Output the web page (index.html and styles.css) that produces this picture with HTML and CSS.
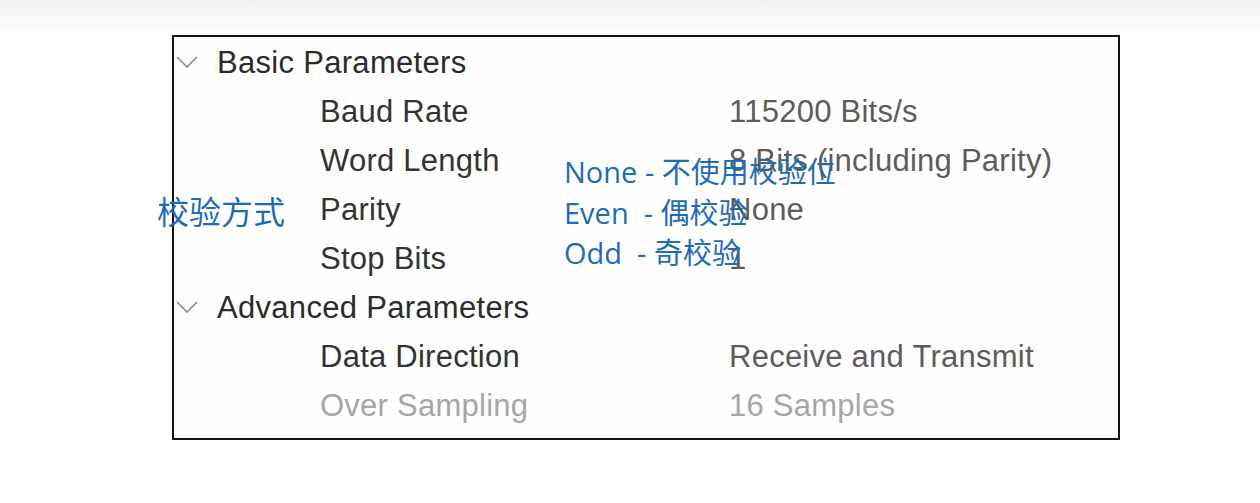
FILE: index.html
```html
<!DOCTYPE html>
<html lang="zh-CN">
<head>
   <meta charset="UTF-8">
   <meta name="viewport" content="width=device-width, initial-scale=1.0">
   <title>USART Parameter Settings</title>
   <link rel="stylesheet" href="styles.css">
</head>
<body>
   <div class="stage">
       <div class="param-box">
           <div class="group-row">
               <svg class="chevron" viewBox="0 0 22 12" width="22" height="12"><path d="M1 1 L11 11 L21 1" fill="none" stroke="#8a8a8a" stroke-width="1.6"/></svg>
               <span class="group-name">Basic Parameters</span>
           </div>
           <div class="param-row"><span class="param-name">Baud Rate</span><span class="param-value">115200 Bits/s</span></div>
           <div class="param-row"><span class="param-name">Word Length</span><span class="param-value">8 Bits (including Parity)</span></div>
           <div class="param-row"><span class="param-name">Parity</span><span class="param-value">None</span></div>
           <div class="param-row"><span class="param-name">Stop Bits</span><span class="param-value">1</span></div>

           <div class="group-row">
               <svg class="chevron" viewBox="0 0 22 12" width="22" height="12"><path d="M1 1 L11 11 L21 1" fill="none" stroke="#8a8a8a" stroke-width="1.6"/></svg>
               <span class="group-name">Advanced Parameters</span>
           </div>
           <div class="param-row"><span class="param-name">Data Direction</span><span class="param-value">Receive and Transmit</span></div>
           <div class="param-row disabled"><span class="param-name">Over Sampling</span><span class="param-value">16 Samples</span></div>
       </div>

       <div class="note-title">校验方式</div>
       <div class="note-list">
           <div class="note-item">None - 不使用校验位</div>
           <div class="note-item">Even &nbsp;- 偶校验</div>
           <div class="note-item">Odd &nbsp;- 奇校验</div>
       </div>
   </div>
</body>
</html>
```

FILE: styles.css
```css
html, body {
    margin: 0;
    height: 100%;
}

body {
    background: linear-gradient(to bottom, #f1f1f1 0, #fbfbfb 26px, #ffffff 34px);
    font-family: 'Liberation Sans', Arial, sans-serif;
}

.stage {
    position: relative;
    height: 503px;
    padding-top: 35px;
    box-sizing: border-box;
}

.param-box {
    margin-left: 172px;
    width: 948px;
    height: 405px;
    box-sizing: border-box;
    border: 2px solid #151515;
    background: #fefefe;
    padding-top: 1px;
}

.group-row {
    display: flex;
    align-items: center;
    height: 49px;
    padding-left: 2px;
}

.chevron {
    margin-top: -2px;
}

.group-name {
    margin-left: 19px;
    font-size: 31px;
    letter-spacing: 0.3px;
    color: #2b2b2b;
}

.param-row {
    display: grid;
    grid-template-columns: 409px 1fr;
    align-items: center;
    height: 49px;
    padding-left: 146px;
    font-size: 31px;
    letter-spacing: 0.25px;
}

.param-name {
    color: #333333;
}

.param-value {
    color: #5c5c5c;
}

.param-row.disabled .param-name,
.param-row.disabled .param-value {
    color: #a6a6a6;
}

.note-title {
    position: absolute;
    left: 157px;
    top: 192px;
    font-family: 'Open Sans', 'Noto Sans CJK SC', sans-serif;
    font-size: 32px;
    line-height: 40px;
    color: #1f6cb6;
}

.note-list {
    position: absolute;
    left: 564px;
    top: 152px;
    font-family: 'Open Sans', 'Noto Sans CJK SC', sans-serif;
    font-size: 29px;
    color: #1f6cb6;
}

.note-item {
    height: 40.5px;
    line-height: 40px;
}
```
